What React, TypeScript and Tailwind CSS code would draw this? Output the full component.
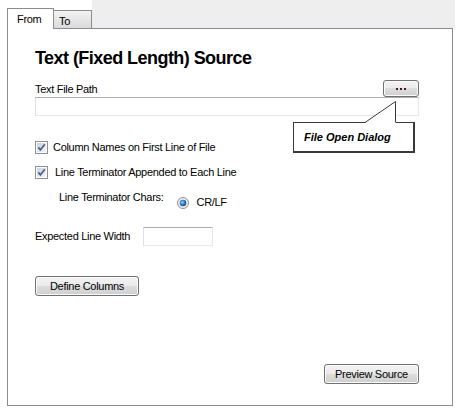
import React from 'react';

const btn =
  'flex items-center justify-center rounded-[3px] border border-[#707070] bg-[linear-gradient(#f2f2f2_0%,#ebebeb_50%,#dddddd_50%,#cfcfcf_100%)] shadow-[inset_0_0_0_1px_#fbfbfb] text-black';

const textBox =
  'border border-[#e3e9ef] border-t-[#abadb3] border-l-[#dbdfe6] bg-white';

function CheckBox() {
  return (
    <svg width="13" height="13" viewBox="0 0 13 13" className="shrink-0">
      <defs>
        <linearGradient id="cbg" x1="0" y1="0" x2="1" y2="1">
          <stop offset="0" stopColor="#cbcfd5" />
          <stop offset="1" stopColor="#f6f6f6" />
        </linearGradient>
      </defs>
      <rect x="0.5" y="0.5" width="12" height="12" fill="#fff" stroke="#8e8f8f" />
      <rect x="2" y="2" width="9" height="9" fill="url(#cbg)" />
      <path d="M3.3 6.4 L5.4 8.8 L9.8 3.2" fill="none" stroke="#4a5f97" strokeWidth="1.7" />
    </svg>
  );
}

function Radio() {
  return (
    <svg width="12" height="12" viewBox="0 0 12 12" className="shrink-0">
      <defs>
        <radialGradient id="rdot" cx="0.4" cy="0.4" r="0.6">
          <stop offset="0" stopColor="#9fd4f8" />
          <stop offset="0.6" stopColor="#2f77c4" />
          <stop offset="1" stopColor="#174e92" />
        </radialGradient>
      </defs>
      <circle cx="6" cy="6" r="5.5" fill="#eef0f2" stroke="#8e8f8f" />
      <circle cx="6" cy="6" r="3.3" fill="url(#rdot)" />
    </svg>
  );
}

export default function App() {
  return (
    <div className="relative h-[417px] w-[464px] overflow-hidden bg-white font-['Liberation_Sans',Arial,sans-serif] text-[11px] leading-[13px] tracking-[-0.3px] text-black">
      {/* tab strip */}
      <div className="flex h-[28px] items-start pl-[7px] pr-[9px]">
        <div className="relative z-10 mt-[8px] h-[21px] w-[47px] border border-b-0 border-[#898c95] bg-white pl-[9px] pt-[4px]">
          From
        </div>
        <div className="mt-[10px] h-[18px] w-[38px] border border-l-0 border-b-0 border-[#898c95] bg-[linear-gradient(#f3f3f3,#dadada)] pl-[5px] pt-[4px]">
          To
        </div>
        <div className="h-[28px] flex-1 bg-[#eeeeee]" />
      </div>

      {/* panel */}
      <div className="ml-[7px] flex h-[378px] w-[446px] flex-col border border-[#898c95] pl-[27px] pr-[33px]">
        <h1 className="mt-[18px] text-[18px] font-bold leading-[22px] tracking-[-0.55px]">
          Text (Fixed Length) Source
        </h1>

        <div className="mt-[11px] flex items-end justify-between">
          <span className="mb-[1px]">Text File Path</span>
          <button className={`${btn} h-[17px] w-[36px] gap-[2px]`}>
            <span className="h-[2px] w-[2px] bg-[#4b1426]" />
            <span className="h-[2px] w-[2px] bg-[#4b1426]" />
            <span className="h-[2px] w-[2px] bg-[#4b1426]" />
          </button>
        </div>
        <div className={`${textBox} h-[19px] w-full`} />

        <label className="mt-[25px] flex h-[13px] items-center gap-[5px]">
          <CheckBox />
          <span>Column Names on First Line of File</span>
        </label>
        <label className="mt-[12px] flex h-[13px] items-center gap-[7px]">
          <CheckBox />
          <span>Line Terminator Appended to Each Line</span>
        </label>

        <div className="mt-[12px] flex items-start pl-[24px]">
          <span>Line Terminator Chars:</span>
          <div className="ml-[14px] mt-[5px] flex h-[13px] items-center gap-[7px]">
            <Radio />
            <span>CR/LF</span>
          </div>
        </div>

        <div className="mt-[18px] flex items-center">
          <span className="w-[108px]">Expected Line Width</span>
          <div className={`${textBox} h-[19px] w-[70px]`} />
        </div>

        <button className={`${btn} mt-[30px] h-[20px] w-[104px] self-start`}>
          Define Columns
        </button>

        <button className={`${btn} mb-[21px] mt-auto h-[20px] w-[95px] self-end`}>
          Preview Source
        </button>
      </div>

      {/* callout */}
      <div className="absolute left-[293px] top-[122px] flex h-[31px] w-[122px] items-center border border-r-2 border-b-2 border-[#3a3a3a] bg-white pl-[10px] text-[11px] font-bold italic tracking-normal">
        File Open Dialog
      </div>
      <svg
        className="absolute left-[360px] top-[98px]"
        width="40"
        height="26"
        viewBox="0 0 40 26"
      >
        <polygon points="5,25 35,3 36,25" fill="#fff" />
        <polyline points="5,24.5 35.5,3.5 35.5,24.5" fill="none" stroke="#3a3a3a" strokeWidth="1" />
      </svg>
    </div>
  );
}
